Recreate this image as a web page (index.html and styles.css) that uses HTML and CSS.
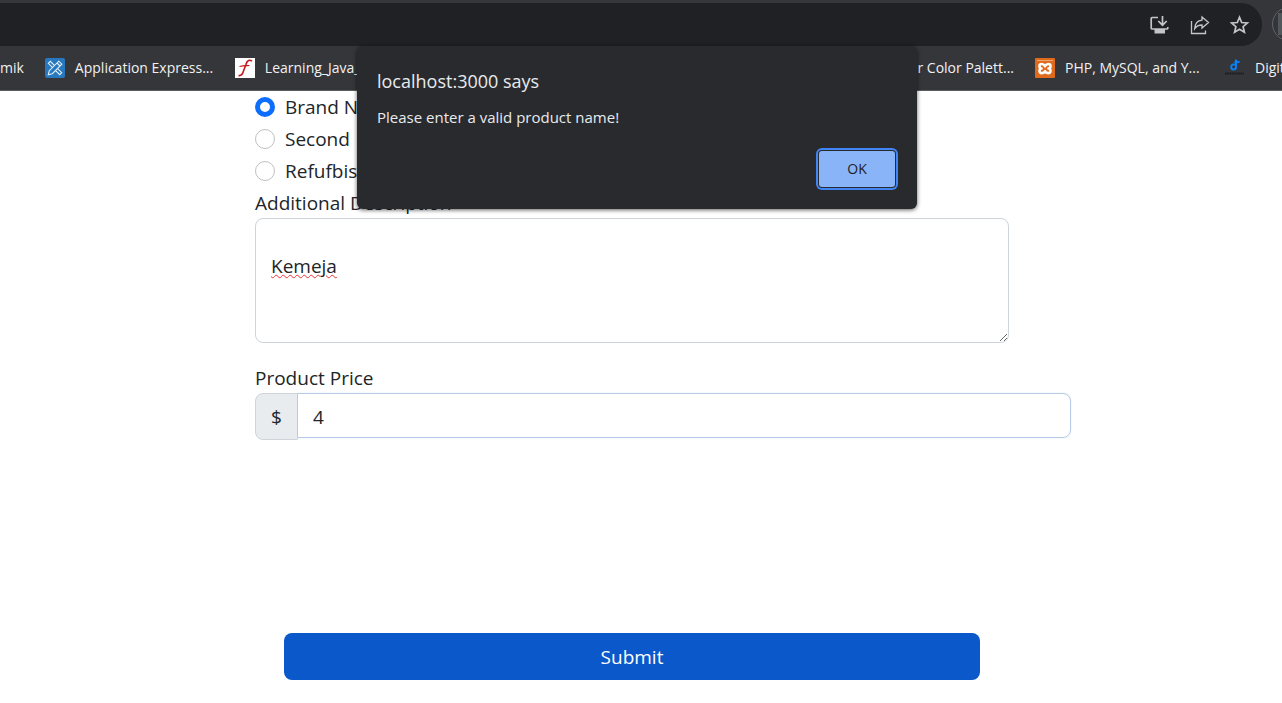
FILE: index.html
```html
<!DOCTYPE html>
<html lang="en">
<head>
<meta charset="utf-8">
<title>Product form</title>
<link rel="stylesheet" href="styles.css">
</head>
<body>
<header class="browser">
  <div class="toolbar">
    <div class="omnibox">
      <button class="tool" aria-label="Install app">
        <svg viewBox="0 0 20 20"><path d="M8 2.500H2.200q-1 0-1 1v9.500q0 1 1 1h14.600q1 0 1-1V12M12.500 1v8.500M8.300 6l4.200 4.200L16.700 6" fill="none" stroke="currentColor" stroke-width="1.700"/><path d="M4.500 14h10.500v4.500H4.500z" fill="currentColor"/></svg>
      </button>
      <button class="tool" aria-label="Share this page">
        <svg viewBox="0 0 20 20"><path d="M1.500 6v12.500h14v-3M12 2l6.500 5.500L12 13v-3c-3.500 0-5.500 1-7.300 3.700C5 9 7.500 5.600 12 5.200z" fill="none" stroke="currentColor" stroke-width="1.300"/></svg>
      </button>
      <button class="tool" aria-label="Bookmark this page">
        <svg viewBox="0 0 20 20"><path d="M9.500 2.300l2.200 5.200 5.700.5-4.300 3.700 1.300 5.500-4.900-2.900-4.900 2.900 1.300-5.500L1.600 8l5.700-.5z" fill="none" stroke="currentColor" stroke-width="1.700"/></svg>
      </button>
    </div>
    <button class="profile" aria-label="Profile"><span class="avatar"></span></button>
  </div>
  <nav class="bookmarks" aria-label="Bookmarks">
    <div class="group group-start">
      <a class="bookmark" href="#"><span>mik</span></a>
      <a class="bookmark" href="#">
        <svg viewBox="0 0 20 20"><rect width="20" height="20" rx="2" fill="#2878be"/><g fill="#2878be" stroke="#e4f0fb" stroke-width="1.100"><path d="M3.300 5.300l2-2L16.700 14.700l-2 2z"/><path d="M3.300 16.700l1-4L13.800 3.200l3 3L7.300 15.700z"/><path d="M12 5l3 3" /></g></svg>
        <span class="label">Application Express...</span></a>
      <a class="bookmark" href="#">
        <svg viewBox="0 0 20 20"><path d="M0 0h20v20H0z" fill="#fff"/><path d="M17 3.200c-2.500-2-4.800-1-6 3L8.500 13c-1 3.500-2.500 5-5 4.500" fill="none" stroke="#c5161d" stroke-width="1.600"/><path d="M4.500 8.500c3-.8 6-.8 10-1" fill="none" stroke="#c5161d" stroke-width="1.200"/></svg>
        <span class="label">Learning_Java_</span></a>
    </div>
    <div class="group group-end">
      <a class="bookmark" href="#"><span class="label label-end">r Color Palett...</span></a>
      <a class="bookmark" href="#">
        <svg viewBox="0 0 20 20"><rect width="20" height="20" rx="1" fill="#e06a1b"/><path d="M2 2.500h16" stroke="#f0a673"/><path d="M10 8.200C9 5.800 4.500 5 4.500 8c0 1.500 1 2.500 2 2.500-1 0-2 1-2 2.500 0 3 4.500 2.500 5.500.2 1 2.300 5.500 2.800 5.500-.2 0-1.500-1-2.500-2-2.500 1 0 2-1 2-2.500 0-3-4.500-2.200-5.500.2z" fill="none" stroke="#fff" stroke-width="2.600" stroke-linejoin="round"/></svg>
        <span class="label">PHP, MySQL, and Y...</span></a>
      <a class="bookmark" href="#">
        <svg viewBox="0 0 20 20"><path d="M11 1.500V9q0 2.500-2.400 2.500T6.200 9t2.400-2.500H11M9.500 4h5" fill="none" stroke="#0b80f5" stroke-width="2"/><path d="M0 15.500h19" stroke="#1c1e23" stroke-width="2" stroke-dasharray="1.700 .5"/></svg>
        <span class="label label-last">Digitalent</span></a>
    </div>
  </nav>
</header>

<main class="page">
  <form class="form">
    <label class="choice"><input type="radio" name="condition" checked>Brand New</label>
    <label class="choice"><input type="radio" name="condition">Second</label>
    <label class="choice"><input type="radio" name="condition">Refufbished</label>
    <label class="title" for="description">Additional Description</label>
    <textarea class="description" id="description" spellcheck="false">Kemeja</textarea>
    <label class="title" for="price">Product Price</label>
    <div class="price">
      <span class="currency">$</span>
      <input class="amount" id="price" type="text" value="4">
    </div>
    <button class="submit" type="button">Submit</button>
  </form>
</main>

<div class="dialog" role="alertdialog" aria-labelledby="dialog-title" aria-describedby="dialog-text">
  <h1 class="dialog-title" id="dialog-title">localhost:3000 says</h1>
  <p class="dialog-text" id="dialog-text">Please enter a valid product name!</p>
  <button class="ok" type="button">OK</button>
</div>
</body>
</html>
```
FILE: styles.css
```css
* { box-sizing: border-box; }

body {
  margin: 0;
  background: #fff;
  color: #212529;
  font: 19px/30px "Open Sans", "Noto Sans", sans-serif;
  overflow-x: hidden;
}

button, input, textarea { font: inherit; color: inherit; margin: 0; }

/* Browser chrome */
.browser {
  background: #35363a;
  border-bottom: 1px solid #5b5c60;
  overflow: hidden;
}
.toolbar {
  display: flex;
  gap: 10px;
  height: 46px;
  padding-top: 3px;
  overflow: hidden;
}
.omnibox {
  flex: 1;
  display: flex;
  align-items: center;
  justify-content: flex-end;
  gap: 20px;
  padding-right: 12px;
  background: #202124;
  border-radius: 0 21px 21px 0;
}
.tool {
  width: 20px;
  height: 20px;
  padding: 0;
  border: 0;
  background: none;
  color: #c4c5c8;
}
.tool svg, .bookmark svg { display: block; width: 20px; height: 20px; flex: none; }
.profile {
  flex: none;
  width: 34px;
  height: 34px;
  margin: 4px -24px 0 0;
  padding: 5px;
  border: 1px solid #5f6368;
  border-radius: 50%;
  background: none;
}
.avatar { display: block; height: 22px; background: #50585c; }
.bookmarks {
  display: flex;
  height: 44px;
  color: #f1f1f2;
  font-size: 14px;
  line-height: 20px;
}
.group { display: flex; align-items: center; gap: 21px; }
.group-start { flex: 1; min-width: 0; overflow: hidden; }
.bookmark {
  display: flex;
  flex: none;
  gap: 10px;
  color: inherit;
  text-decoration: none;
  white-space: nowrap;
}
.label { width: 139px; }
.label-end { text-align: right; }
.label-last { width: 27px; overflow: hidden; }

/* Product form */
.page { padding: 1px 211px 23px 255px; }
.form { display: flex; flex-direction: column; }
.choice {
  display: flex;
  align-items: center;
  gap: 10px;
  margin-bottom: 2px;
}
.choice input {
  appearance: none;
  width: 20px;
  height: 20px;
  border: 1px solid #bfbfbf;
  border-radius: 50%;
  background: #fff;
}
.choice input:checked { border: 5px solid #0d6efd; }
.title { line-height: 30px; }
.description {
  width: calc(100% - 62px);
  height: 125px;
  margin-bottom: 20px;
  padding: 32px 15px 0;
  border: 1px solid #ced4da;
  border-radius: 8px;
  background: #fff;
  line-height: 30px;
  outline: 0;
  resize: both;
  text-decoration: underline wavy #f03030 1px;
}
.price { display: flex; align-items: flex-start; }
.currency {
  width: 43px;
  height: 47px;
  padding-top: 8px;
  border: 1px solid #ced4da;
  border-radius: 8px 0 0 8px;
  background: #e9ecef;
  line-height: 30px;
  text-align: center;
}
.amount {
  flex: 1;
  min-width: 0;
  height: 45px;
  margin-left: -1px;
  padding: 2px 15px 0;
  border: 1px solid #b8cbe6;
  border-radius: 0 8px 8px 0;
  background: #fff;
  box-shadow: 0 0 2px #e3edf9;
  outline: 0;
}
.submit {
  height: 47px;
  margin: 193px 91px 0 29px;
  border: 0;
  border-radius: 8px;
  background: #0a58ca;
  color: #fff;
}

/* Alert lies over the toolbar and the page */
.dialog {
  position: absolute;
  top: 46px;
  left: calc(50% - 284px);
  width: 560px;
  padding: 20px;
  border-radius: 6px;
  background: #292a2d;
  box-shadow: 0 1px 4px #000000a0;
  color: #e8eaed;
  display: flex;
  flex-direction: column;
}
.dialog-title { margin: 0; font-size: 18px; line-height: 30px; font-weight: 400; }
.dialog-text { margin: 11px 0 21px; font-size: 15px; line-height: 20px; }
.ok {
  align-self: flex-end;
  width: 76px;
  height: 36px;
  margin: 3px 2px 2px 0;
  padding: 0;
  border: 0;
  border-radius: 3px;
  background: #8ab4f8;
  box-shadow: 0 0 0 1px #292a2d, 0 0 0 3px #4285f4;
  color: #202124;
  font-size: 14px;
}
```
